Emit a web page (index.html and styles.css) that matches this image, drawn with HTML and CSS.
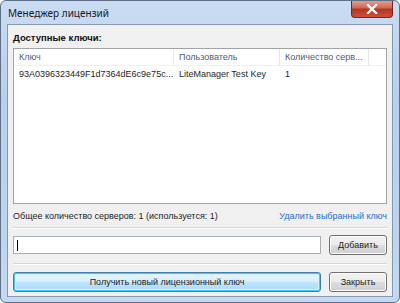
FILE: index.html
```html
<!DOCTYPE html>
<html lang="ru">
  <head>
    <meta charset="UTF-8" />
    <title>Менеджер лицензий</title>
    <link rel="stylesheet" href="styles.css">
  </head>
  <body>
    <div class="window">
      <div class="titlebar">
        <span class="title">Менеджер лицензий</span>
        <span class="close">
          <svg width="12" height="10" viewBox="0 0 12 10">
            <path d="M2 1 L10 9 M10 1 L2 9" stroke="#fff" stroke-width="2.4" stroke-linecap="square" />
          </svg>
        </span>
      </div>
      <div class="client">
        <div class="group-label">Доступные ключи:</div>
        <div class="listview">
          <div class="row head">
            <div class="col c1">Ключ</div>
            <div class="col c2">Пользователь</div>
            <div class="col c3">Количество серв...</div>
            <div class="col c4"></div>
          </div>
          <div class="row">
            <div class="col c1">93A0396323449F1d7364dE6c9e75c...</div>
            <div class="col c2">LiteManager Test Key</div>
            <div class="col c3">1</div>
          </div>
        </div>
        <div class="status">
          <span>Общее количество серверов: 1 (используется: 1)</span>
          <a class="link">Удалить выбранный ключ</a>
        </div>
        <div class="sep"></div>
        <div class="line">
          <div class="edit"><span class="caret"></span></div>
          <button class="btn">Добавить</button>
        </div>
        <div class="sep"></div>
        <div class="line">
          <button class="btn wide default">Получить новый лицензионный ключ</button>
          <button class="btn">Закрыть</button>
        </div>
      </div>
    </div>
  </body>
</html>
```
FILE: styles.css
```css
body {
  margin: 0;
  background: #fff;
  font-family: "Liberation Sans", Arial, sans-serif;
  font-size: 9px;
  color: #1e1e1e;
}
.window {
  width: 400px;
  height: 303px;
  box-sizing: border-box;
  border: 1px solid #5f7086;
  border-radius: 6px;
  background: linear-gradient(180deg, #c9dcf2 0%, #b9d0ec 30%, #bcd3ee 70%, #c4d9f1 100%);
  display: flex;
  flex-direction: column;
  overflow: hidden;
}
.titlebar {
  height: 23px;
  flex-shrink: 0;
  display: flex;
  align-items: flex-start;
  justify-content: space-between;
  padding: 0 6px 0 7px;
}
.title {
  font-family: "Noto Sans", "Open Sans", sans-serif;
  font-size: 10px;
  color: #1a1a1a;
  margin-top: 5px;
}
.close {
  width: 42px;
  height: 18px;
  margin-top: -1px;
  border: 1px solid #6b2a2a;
  border-top: none;
  border-radius: 0 0 4px 4px;
  background: linear-gradient(180deg, #e8a493 0%, #d06a56 45%, #b8341f 55%, #c9513b 100%);
  display: flex;
  align-items: center;
  justify-content: center;
  box-sizing: border-box;
}
.client {
  flex: 1;
  margin: 0 6px 6px;
  border: 1px solid #8799b0;
  background: #f0f0f0;
  padding: 6px 5px 4px 5px;
  display: flex;
  flex-direction: column;
}
.group-label {
  font-weight: bold;
  font-size: 9.5px;
  color: #111;
  height: 14px;
  line-height: 14px;
  margin-bottom: 3px;
}
.listview {
  height: 156px;
  box-sizing: border-box;
  flex-shrink: 0;
  border: 1px solid #a0a3a8;
  background: #fff;
}
.row {
  display: flex;
  height: 17px;
  line-height: 17px;
}
.row.head {
  height: 16px;
  line-height: 16px;
  color: #4c607a;
  border-bottom: 1px solid #f0f0f0;
}
.row .col {
  padding-left: 5px;
  box-sizing: border-box;
  white-space: nowrap;
  overflow: hidden;
}
.row.head .col {
  border-right: 1px solid #e3e6ea;
}
.c1 { width: 160px; }
.c2 { width: 106px; }
.c3 { width: 89px; }
.c4 { flex: 1; }
.row.head .c4 { border-right: none; }
.status {
  display: flex;
  justify-content: space-between;
  align-items: center;
  height: 20px;
  margin-top: 2px;
  flex-shrink: 0;
}
.link {
  color: #1f6fd0;
}
.sep {
  height: 0;
  flex-shrink: 0;
  border-top: 1px solid #d5d5d5;
  border-bottom: 1px solid #fff;
  margin: 1px 0 6px;
}
.line + .sep {
  margin: 8px 0 7px;
}
.line {
  display: flex;
  gap: 8px;
  align-items: center;
  flex-shrink: 0;
}
.edit {
  flex: 1;
  height: 18px;
  box-sizing: border-box;
  border: 1px solid #abadb3;
  border-top-color: #a9b3c4;
  background: #fff;
  display: flex;
  align-items: center;
  padding-left: 3px;
}
.caret {
  width: 1px;
  height: 11px;
  background: #000;
}
.btn {
  width: 58px;
  height: 20px;
  font-family: "Liberation Sans", Arial, sans-serif;
  font-size: 9px;
  color: #1e1e1e;
  border: 1px solid #707070;
  border-radius: 3px;
  background: linear-gradient(180deg, #f2f2f2 0%, #ebebeb 48%, #dddddd 52%, #cfcfcf 100%);
  box-shadow: inset 0 0 0 1px #fcfcfc;
  padding: 0;
}
.btn.wide {
  flex: 1;
}
.btn.default {
  border-color: #3c7fb1;
  background: linear-gradient(180deg, #e8f6fd 0%, #d8eefb 48%, #bee6fd 52%, #a7d9f5 100%);
  box-shadow: inset 0 0 0 1px #48c6f5, inset 0 0 0 2px #d9f2fd;
}
```
